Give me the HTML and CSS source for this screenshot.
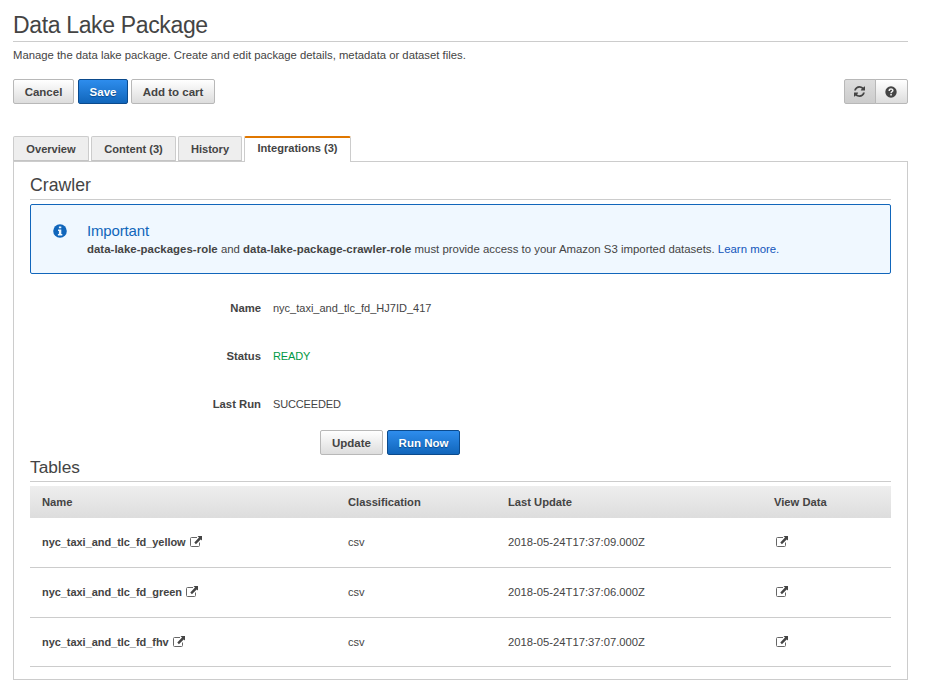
FILE: index.html
```html
<!DOCTYPE html>
<html lang="en">
<head>
<meta charset="utf-8">
<title>Data Lake Package</title>
<link rel="stylesheet" href="styles.css">
</head>
<body>
<svg class="defs" width="0" height="0" aria-hidden="true">
  <symbol id="external" viewBox="0 0 12 11">
    <path d="M7 1.500H1.500Q.5 1.500 .5 2.500V9.500Q.5 10.500 1.500 10.500H8.500Q9.500 10.500 9.500 9.500V6.500" fill="none" stroke="#666" stroke-width="1"/>
    <path d="M7.500 0H12V4.500L10.700 3.400 5.900 8.200 4.300 6.600 9 1.500Z" fill="#444"/>
  </symbol>
</svg>
<main class="page">
  <h1 class="page-title">Data Lake Package</h1>
  <p class="lead">Manage the data lake package. Create and edit package details, metadata or dataset files.</p>
  <div class="toolbar">
    <button class="btn btn-cancel">Cancel</button>
    <button class="btn btn-primary btn-save">Save</button>
    <button class="btn btn-cart">Add to cart</button>
    <div class="icon-group">
      <button class="btn icon-btn active" aria-label="Refresh">
        <svg width="11" height="11" viewBox="0 0 1536 1536"><path fill="#444" d="M1511 928q0 5-1 7-64 268-268 434.500T764 1536q-146 0-282.500-55T238 1324l-129 129q-19 19-45 19t-45-19-19-45V960q0-26 19-45t45-19h448q26 0 45 19t19 45-19 45l-137 137q71 66 161 102t187 36q134 0 250-65t186-179q11-17 53-117 8-23 30-23h192q13 0 22.500 9.500t9.500 22.500zm25-800v448q0 26-19 45t-45 19h-448q-26 0-45-19t-19-45 19-45l138-138Q969 256 768 256q-134 0-250 65T332 500q-11 17-53 117-8 23-30 23H50q-13 0-22.500-9.500T18 608v-7q65-268 270-434.500T768 0q146 0 284 55.500T1297 212l130-129q19-19 45-19t45 19 19 45z"/></svg>
      </button>
      <button class="btn icon-btn" aria-label="Help">
        <svg width="12" height="12" viewBox="0 0 12 12"><circle cx="6" cy="6" r="5.700" fill="#444"/><path d="M4.200 4.900C4.200 2.500 7.900 2.600 7.800 4.600 7.700 5.800 6.100 5.700 6.050 7.200" fill="none" stroke="#eee" stroke-width="1.500"/><path d="M5.250 8h1.600v1.500h-1.600z" fill="#eee"/></svg>
      </button>
    </div>
  </div>
  <nav class="tabs">
    <a class="tab tab-1">Overview</a>
    <a class="tab tab-2">Content (3)</a>
    <a class="tab tab-3">History</a>
    <a class="tab tab-4 selected">Integrations (3)</a>
  </nav>
  <section class="panel">
    <h2 class="section-title">Crawler</h2>
    <div class="alert">
      <svg class="info" width="14" height="14" viewBox="0 0 14 14"><circle cx="7" cy="7" r="6.800" fill="#1166bb"/><path d="M5.900 2.400h2.400v1.900H5.900zM5 5.500h3.300v4.400h1v1.500H4.900V9.900h1V7H5z" fill="#f0f8ff"/></svg>
      <div>
        <h3 class="alert-title">Important</h3>
        <p class="alert-text"><b>data-lake-packages-role</b> and <b>data-lake-package-crawler-role</b> must provide access to your Amazon S3 imported datasets. <a class="link">Learn more.</a></p>
      </div>
    </div>
    <dl class="details">
      <dt>Name</dt><dd>nyc_taxi_and_tlc_fd_HJ7ID_417</dd>
      <dt>Status</dt><dd class="caps ready">READY</dd>
      <dt>Last Run</dt><dd class="caps">SUCCEEDED</dd>
    </dl>
    <div class="actions">
      <button class="btn btn-update">Update</button>
      <button class="btn btn-primary btn-run">Run Now</button>
    </div>
    <h2 class="section-title tables-title">Tables</h2>
    <table class="grid">
      <thead><tr><th class="c1">Name</th><th class="c2">Classification</th><th class="c3">Last Update</th><th>View Data</th></tr></thead>
      <tbody>
        <tr><td><b>nyc_taxi_and_tlc_fd_yellow</b><svg class="ext"><use href="#external"/></svg></td><td>csv</td><td class="time">2018-05-24T17:37:09.000Z</td><td class="view"><svg class="ext"><use href="#external"/></svg></td></tr>
        <tr><td><b>nyc_taxi_and_tlc_fd_green</b><svg class="ext"><use href="#external"/></svg></td><td>csv</td><td class="time">2018-05-24T17:37:06.000Z</td><td class="view"><svg class="ext"><use href="#external"/></svg></td></tr>
        <tr><td><b>nyc_taxi_and_tlc_fd_fhv</b><svg class="ext"><use href="#external"/></svg></td><td>csv</td><td class="time">2018-05-24T17:37:07.000Z</td><td class="view"><svg class="ext"><use href="#external"/></svg></td></tr>
      </tbody>
    </table>
  </section>
</main>
</body>
</html>
```
FILE: styles.css
```css
* { box-sizing: border-box; }
body { margin: 0; background: #fff; color: #444; font: 11px/18px "Liberation Sans", Arial, sans-serif; }
h1, h2, h3, p, dl, dd { margin: 0; font-weight: normal; }
.defs { display: none; }
.page { padding: 10px 18px 0 13px; }
.page-title { height: 32px; border-bottom: 1px solid #ccc; font-size: 23px; line-height: 31px; letter-spacing: -.35px; }
.lead { margin-top: 4px; font-size: 11.300px; }
.toolbar { display: flex; gap: 4px; margin-top: 15px; }
.btn { height: 25px; padding: 1px 0 0; border: 1px solid #b8b8b8; border-radius: 2px; background: linear-gradient(#fff, #ddd); color: #444; font: bold 11.500px/22px "Liberation Sans", Arial, sans-serif; text-align: center; white-space: nowrap; }
.btn-primary { border-color: #0b4a8c; background: linear-gradient(#2e8ded, #1166bb); color: #fff; text-shadow: 0 1px 1px #0b4a8c; }
.btn-cancel { width: 61px; }
.btn-save { width: 50px; }
.btn-cart { width: 84px; margin-left: -1px; }
.btn-update { width: 63px; }
.btn-run { width: 73px; }
.icon-group { display: flex; margin-left: auto; }
.icon-btn { display: flex; align-items: center; justify-content: center; width: 33px; padding: 0 1px 0 0; border-radius: 0 2px 2px 0; }
.icon-btn.active { width: 32px; margin-right: -1px; border-radius: 2px 0 0 2px; background: linear-gradient(#ddd, #ccc); }
.tabs { display: flex; gap: 2px; margin-top: 32px; }
.tab { height: 25px; border: 1px solid #ccc; border-bottom-color: #c4c4c4; border-radius: 2px 2px 0 0; background: #eee; font-weight: bold; font-size: 11.100px; line-height: 24px; text-align: center; }
.tab-1 { width: 76px; }
.tab-2 { width: 85px; }
.tab-3 { width: 64px; }
.tab-4 { width: 107px; }
.tab.selected { height: 26px; margin-bottom: -1px; border-top: 2px solid #e07700; border-bottom: 0; background: #fff; line-height: 21px; }
.panel { height: 519px; padding: 12px 16px 0; border: 1px solid #ccc; }
.section-title { height: 26px; border-bottom: 1px solid #ccc; font-size: 17.700px; line-height: 22px; }
.alert { display: flex; height: 70px; margin-top: 4px; padding: 17px 22px; border: 1px solid #1166bb; border-radius: 2px; background: #f0f8ff; }
.info { flex: none; margin: 2px 20px 0 0; }
.alert-title { color: #1166bb; font-size: 15px; line-height: 18px; letter-spacing: -.15px; }
.alert-text { font-size: 11.400px; white-space: nowrap; }
.alert-text b { letter-spacing: .04px; }
.link { color: #1155bb; }
.details { display: grid; grid-template-columns: 231px 1fr; column-gap: 12px; row-gap: 30px; margin-top: 25px; }
.details dt { font-size: 11.300px; font-weight: bold; text-align: right; }
.details .caps { letter-spacing: -.15px; }
.details .ready { color: #094; }
.actions { display: flex; gap: 4px; margin: 17px 0 0 290px; }
.tables-title { margin-top: 1px; font-size: 17.300px; }
.grid { width: 100%; margin-top: 4px; border-collapse: separate; border-spacing: 0; table-layout: fixed; text-align: left; }
.grid thead tr { background: linear-gradient(#eee, #ddd); }
.grid th { height: 32px; padding: 0 12px; font-size: 11.200px; }
.grid td { height: 50px; padding: 0 12px 1px; border-bottom: 1px solid #ccc; }
.grid tr:last-child td { height: 49px; padding-bottom: 0; }
.grid b { letter-spacing: -.05px; }
.grid .time { font-size: 11.250px; }
.grid .view { padding-left: 14px; }
.c1 { width: 306px; }
.c2 { width: 160px; }
.c3 { width: 266px; }
.ext { display: inline-block; width: 12px; height: 11px; vertical-align: -1px; }
b + .ext { margin-left: 4px; }
```
